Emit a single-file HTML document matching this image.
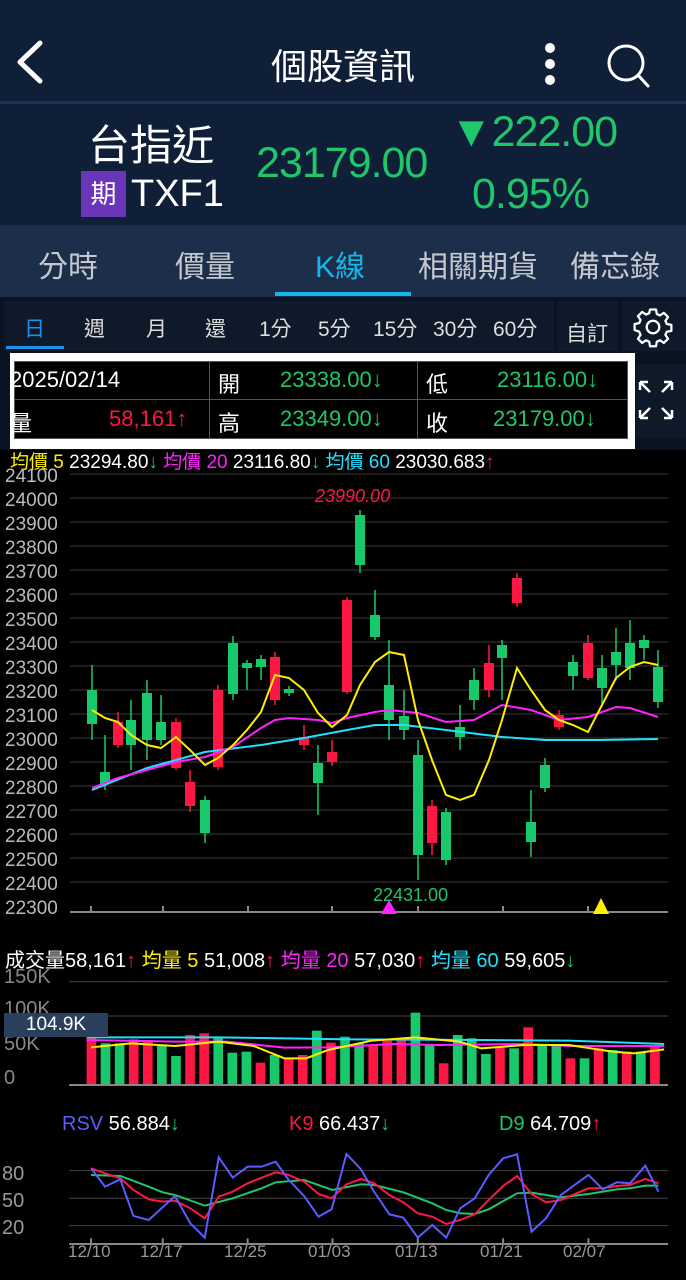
<!DOCTYPE html>
<html><head><meta charset="utf-8"><style>
*{margin:0;padding:0;box-sizing:border-box}
body{width:686px;height:1280px;background:#000;font-family:"Liberation Sans","Noto Sans CJK TC",sans-serif;color:#fff;position:relative;overflow:hidden}
.a{position:absolute;white-space:nowrap}
.g{color:#1fc66a}.r{color:#ff1744}
</style></head><body>
<div class="a" style="left:0;top:0;width:686px;height:102px;background:#0f1f38"></div>
<div class="a" style="left:0;top:101px;width:686px;height:3px;background:#14345a"></div>
<div class="a" style="left:0;top:104px;width:686px;height:121px;background:#0f1f38"></div>
<svg class="a" style="left:14px;top:40px" width="30" height="44"><path d="M26 3 L6 22 L26 41" stroke="#fff" stroke-width="5" fill="none" stroke-linecap="round" stroke-linejoin="round"/></svg>
<div class="a" style="left:0;width:686px;text-align:center;top:38px;font-size:36px">個股資訊</div>
<svg class="a" style="left:538px;top:42px" width="24" height="44"><circle cx="12" cy="6" r="5" fill="#fff"/><circle cx="12" cy="22" r="5" fill="#fff"/><circle cx="12" cy="38" r="5" fill="#fff"/></svg>
<svg class="a" style="left:604px;top:42px" width="48" height="48"><circle cx="22" cy="21" r="17" stroke="#fff" stroke-width="3" fill="none"/><path d="M34 33 L44 44" stroke="#fff" stroke-width="3" stroke-linecap="round"/></svg>
<div class="a" style="left:88px;top:112px;font-size:42px">台指近</div>
<div class="a" style="left:81px;top:171px;width:45px;height:46px;background:#6a35b8;font-size:26px;text-align:center;line-height:46px">期</div>
<div class="a" style="left:131px;top:173px;font-size:38px">TXF1</div>
<div class="a g" style="left:256px;top:139px;font-size:43px;letter-spacing:-1px">23179.00</div>
<div class="a g" style="left:450px;top:108px;font-size:43px;letter-spacing:-1px">▼222.00</div>
<div class="a g" style="left:472px;top:170px;font-size:43px;letter-spacing:-1px">0.95%</div>
<div class="a" style="left:0;top:225px;width:686px;height:72px;background:#1c2e4a"></div>
<div class="a" style="left:38px;top:242px;font-size:30px;color:#c4c8ce">分時</div>
<div class="a" style="left:175px;top:242px;font-size:30px;color:#c4c8ce">價量</div>
<div class="a" style="left:315px;top:242px;font-size:30px;color:#18b6e8">K線</div>
<div class="a" style="left:418px;top:242px;font-size:30px;color:#c4c8ce">相關期貨</div>
<div class="a" style="left:570px;top:242px;font-size:30px;color:#c4c8ce">備忘錄</div>
<div class="a" style="left:275px;top:292px;width:136px;height:4px;background:#18b6e8"></div>
<div class="a" style="left:0;top:297px;width:686px;height:153px;background:#0a1322"></div>
<div class="a" style="left:4px;top:301px;width:550px;height:50px;background:#0e1a2a"></div>
<div class="a" style="left:557px;top:301px;width:61px;height:50px;background:#0e1a2a"></div>
<div class="a" style="left:622px;top:301px;width:64px;height:50px;background:#0e1a2a"></div>
<div class="a" style="left:0;top:313px;font-size:21px;color:#ddd;width:560px">
<span class="a" style="left:24px;color:#1e90e8">日</span><span class="a" style="left:84px">週</span><span class="a" style="left:146px">月</span><span class="a" style="left:205px">還</span><span class="a" style="left:259px">1分</span><span class="a" style="left:318px">5分</span><span class="a" style="left:373px">15分</span><span class="a" style="left:433px">30分</span><span class="a" style="left:493px">60分</span><span class="a" style="left:566px;top:5px">自訂</span></div>
<div class="a" style="left:6px;top:346px;width:58px;height:3px;background:#1e90e8"></div>
<svg class="a" style="left:632px;top:306px" width="42" height="42" viewBox="0 0 24 24"><path d="M10.3 2h3.4l.5 2.6 1.8.8 2.2-1.5 2.4 2.4-1.5 2.2.8 1.8 2.6.5v3.4l-2.6.5-.8 1.8 1.5 2.2-2.4 2.4-2.2-1.5-1.8.8-.5 2.6h-3.4l-.5-2.6-1.8-.8-2.2 1.5-2.4-2.4 1.5-2.2-.8-1.8L1.5 13.7v-3.4l2.6-.5.8-1.8-1.5-2.2 2.4-2.4 2.2 1.5 1.8-.8z" fill="none" stroke="#fff" stroke-width="1.3" stroke-linejoin="round"/><circle cx="12" cy="12" r="3.6" fill="none" stroke="#fff" stroke-width="1.3"/></svg>
<div class="a" style="left:636px;top:364px;width:50px;height:74px;background:#0e1a2a"></div>
<svg class="a" style="left:636px;top:378px" width="40" height="44" stroke="#fff" stroke-width="2.5" fill="none"><path d="M4 4 L14 14 M4 4 h8 M4 4 v8 M36 4 L26 14 M36 4 h-8 M36 4 v8 M4 40 L14 30 M4 40 h8 M4 40 v-8 M36 40 L26 30 M36 40 h-8 M36 40 v-8"/></svg>
<div class="a" style="left:10px;top:353px;width:625px;height:96px;background:#fff"></div>
<div class="a" style="left:14px;top:361px;width:614px;height:78px;background:#000;border:1px solid #555"></div>
<div class="a" style="left:14px;top:399px;width:614px;height:1px;background:#555"></div>
<div class="a" style="left:209px;top:361px;width:1px;height:78px;background:#555"></div>
<div class="a" style="left:417px;top:361px;width:1px;height:78px;background:#555"></div>
<div class="a" style="top:367px;left:0;font-size:22px">
<span class="a" style="left:10px">2025/02/14</span><span class="a" style="left:218px">開</span><span class="a g" style="left:280px">23338.00↓</span><span class="a" style="left:426px">低</span><span class="a g" style="left:497px">23116.00↓</span></div>
<div class="a" style="top:406px;left:0;font-size:22px">
<span class="a" style="left:10px">量</span><span class="a r" style="left:109px">58,161↑</span><span class="a" style="left:218px">高</span><span class="a g" style="left:280px">23349.00↓</span><span class="a" style="left:426px">收</span><span class="a g" style="left:493px">23179.00↓</span></div>
<div class="a" style="left:10px;top:447px;font-size:19px"><span style="color:#ffee00">均價 5</span> 23294.80<span class="g">↓</span> <span style="color:#ff22ff">均價 20</span> 23116.80<span class="g">↓</span> <span style="color:#22e0ff">均價 60</span> 23030.683<span class="r">↑</span></div>
<div class="a" style="left:5px;top:465px;font-size:19px;color:#bbb;line-height:24px">24100<br>24000<br>23900<br>23800<br>23700<br>23600<br>23500<br>23400<br>23300<br>23200<br>23100<br>23000<br>22900<br>22800<br>22700<br>22600<br>22500<br>22400<br>22300</div>
<svg class="a" style="left:0;top:0" width="686" height="1280">
<g stroke="#3a3a3a" stroke-width="1">
<path d="M70 474H668M70 498H668M70 522H668M70 546H668M70 570H668M70 594H668M70 618H668M70 642H668M70 666H668M70 690H668M70 714H668M70 738H668M70 762H668M70 786H668M70 810H668M70 834H668M70 858H668M70 882H668"/>
</g>
<path d="M70 912H668" stroke="#888" stroke-width="2"/>
<path d="M91 906v6M163 906v6M248 906v6M332 906v6M418 906v6M503 906v6M588 906v6" stroke="#888" stroke-width="2"/>
<g id="c"></g>
<polyline fill="none" stroke="#22e0ff" stroke-width="2" points="92,790 147,768 205,752 261,745 304,738 347,730 375,725 404,725 446,730 502,737 545,740 600,740 658,739"/>
<polyline fill="none" stroke="#ff22ff" stroke-width="2" points="92,788 118,778 147,770 176,762 205,757 233,747 261,728 275,720 289,718 318,720 332,723 347,718 375,712 389,710 418,713 446,722 474,720 502,705 531,710 559,720 588,717 616,707 630,708 658,717"/>
<polyline fill="none" stroke="#ffee00" stroke-width="2" points="92,710 105,718 118,722 131,735 147,745 161,748 176,737 190,750 205,765 218,758 233,745 247,730 261,712 275,675 289,678 304,690 318,713 332,727 347,715 360,685 375,662 389,652 404,655 418,720 432,760 446,795 460,800 474,795 489,760 502,720 517,668 531,690 545,710 559,720 573,725 588,732 602,705 616,678 630,667 644,662 658,665"/>
<path d="M381 914 L389 900 L397 914Z" fill="#ff22ff"/><path d="M593 914 L601 898 L609 914Z" fill="#ffee00"/>
<text x="315" y="502" font-size="18" font-style="italic" fill="#ff1744" font-family="Liberation Sans">23990.00</text>
<text x="373" y="901" font-size="18" fill="#1fc66a" font-family="Liberation Sans">22431.00</text>
</svg>
<div class="a" style="left:5px;top:944px;font-size:20px">成交量58,161<span class="r">↑</span> <span style="color:#ffee00">均量 5</span> 51,008<span class="r">↑</span> <span style="color:#ff22ff">均量 20</span> 57,030<span class="r">↑</span> <span style="color:#22e0ff">均量 60</span> 59,605<span class="g">↓</span></div>
<div class="a" style="left:4px;top:966px;font-size:20px;color:#888">150K</div>
<div class="a" style="left:4px;top:998px;font-size:20px;color:#888">100K</div>
<div class="a" style="left:4px;top:1033px;font-size:20px;color:#888">50K</div>
<div class="a" style="left:4px;top:1067px;font-size:20px;color:#888">0</div>
<svg class="a" style="left:0;top:940px" width="686" height="340">
<g transform="scale(0.4375,0.3333)">
<path d="M158 125H1527M158 228H1527" stroke="#444" stroke-width="1" vector-effect="non-scaling-stroke"/>
<g id="v"></g>
<path d="M158 435H1527" stroke="#888" stroke-width="2" vector-effect="non-scaling-stroke"/>
<g fill="none" stroke-width="2" vector-effect="non-scaling-stroke">
<polyline vector-effect="non-scaling-stroke" stroke="#22e0ff" points="198,292 500,292 800,298 1100,300 1300,302 1518,312"/>
<polyline vector-effect="non-scaling-stroke" stroke="#ff22ff" points="198,300 400,305 520,305 650,323 750,322 900,312 1000,315 1200,312 1300,318 1518,318"/>
<polyline vector-effect="non-scaling-stroke" stroke="#ffee00" points="208,322 300,310 400,318 500,305 580,318 650,355 700,355 750,330 850,302 950,292 1050,305 1100,325 1200,315 1300,315 1400,335 1450,340 1518,328"/>
<path vector-effect="non-scaling-stroke" d="M158 692H1527M158 775H1527M158 857H1527" stroke="#444" stroke-width="1"/>
<path vector-effect="non-scaling-stroke" d="M158 912H1527M208 895v17M372 895v17M566 895v17M760 895v17M955 895v17M1150 895v17M1345 895v17" stroke="#888" stroke-width="2"/>
<polyline vector-effect="non-scaling-stroke" stroke="#1fc66a" points="208,705 275,708 340,740 372,757 400,765 468,797 532,775 598,745 630,727 695,720 760,750 825,733 855,735 922,757 988,790 1020,810 1052,820 1085,822 1117,808 1182,760 1215,758 1282,772 1345,762 1410,748 1440,745 1475,737 1505,737"/>
<polyline vector-effect="non-scaling-stroke" stroke="#ff1744" points="208,685 240,700 275,715 305,750 340,778 372,785 400,782 435,805 468,835 500,770 532,755 566,730 598,713 630,697 660,705 695,725 728,762 758,775 792,733 825,717 855,730 890,765 922,787 955,820 988,830 1020,852 1052,840 1085,823 1117,780 1150,738 1182,708 1215,762 1248,787 1282,780 1345,745 1378,745 1410,738 1440,735 1475,717 1505,730"/>
<polyline vector-effect="non-scaling-stroke" stroke="#5b5bff" points="208,685 240,740 275,718 305,828 340,840 400,768 435,850 468,893 500,652 532,713 566,680 598,680 630,665 660,720 695,768 728,830 758,808 792,642 825,688 855,755 890,823 922,833 955,893 988,855 1020,893 1052,805 1085,775 1117,705 1150,655 1182,643 1215,875 1248,835 1282,765 1345,705 1378,748 1410,727 1440,730 1475,677 1505,755"/>
</g></g></svg>
<div class="a" style="left:4px;top:1013px;width:104px;height:24px;background:#2a3f5c;font-size:19px;text-align:center;line-height:24px">104.9K</div>
<div class="a" style="left:62px;top:1113px;font-size:20px"><span style="color:#5b5bff">RSV</span> 56.884<span class="g">↓</span></div>
<div class="a" style="left:289px;top:1113px;font-size:20px"><span class="r">K9</span> 66.437<span class="g">↓</span></div>
<div class="a" style="left:499px;top:1113px;font-size:20px"><span class="g">D9</span> 64.709<span class="r">↑</span></div>
<div class="a" style="left:2px;top:1161px;font-size:20px;color:#999;line-height:27px">80<br>50<br>20</div>
<div class="a" style="top:1242px;left:0;font-size:17px;color:#999">
<span class="a" style="left:68px">12/10</span><span class="a" style="left:140px">12/17</span><span class="a" style="left:224px">12/25</span><span class="a" style="left:308px">01/03</span><span class="a" style="left:395px">01/13</span><span class="a" style="left:480px">01/21</span><span class="a" style="left:563px">02/07</span></div>
<script>
var C=[[92,690,724,665,740,'g'],[105,772,784,735,790,'g'],[118,722,745,712,748,'r'],[131,720,745,700,770,'g'],[147,693,740,680,760,'g'],[161,722,740,695,745,'g'],[176,722,768,718,770,'r'],[190,782,806,770,812,'r'],[205,800,833,796,843,'g'],[218,690,767,685,770,'r'],[233,643,694,636,700,'g'],[247,663,668,660,690,'g'],[261,659,667,655,680,'g'],[275,657,700,652,705,'r'],[289,689,693,686,696,'g'],[304,737,745,725,750,'r'],[318,763,783,745,815,'g'],[332,752,762,740,766,'r'],[347,600,692,597,694,'r'],[360,515,565,510,573,'g'],[375,615,637,590,640,'g'],[389,685,720,640,740,'g'],[404,716,730,690,740,'g'],[418,755,855,740,880,'g'],[432,806,843,800,855,'r'],[446,812,860,808,865,'g'],[460,727,737,705,750,'g'],[474,680,700,668,710,'g'],[489,663,690,645,697,'r'],[502,645,658,640,700,'g'],[517,578,603,573,607,'r'],[531,822,842,790,857,'g'],[545,765,788,758,792,'g'],[559,715,727,710,730,'r'],[573,662,676,655,690,'g'],[588,643,678,635,680,'r'],[602,668,688,655,705,'g'],[616,652,665,628,680,'g'],[630,643,668,620,680,'g'],[644,640,648,635,660,'g'],[658,667,702,650,708,'g']];
var s='';C.forEach(function(c){var col=c[5]=='g'?'#19c86a':'#ff1744';s+='<line x1="'+c[0]+'" x2="'+c[0]+'" y1="'+c[3]+'" y2="'+c[4]+'" stroke="'+col+'" stroke-width="1.5"/><rect x="'+(c[0]-5)+'" y="'+c[1]+'" width="10" height="'+Math.max(2,c[2]-c[1])+'" fill="'+col+'"/>';});
document.getElementById('c').innerHTML=s;
var T=[290,310,310,298,300,315,348,285,280,295,338,335,368,345,355,345,272,308,290,310,315,302,300,218,316,370,285,295,342,320,325,262,315,318,355,355,325,330,335,335,315];
var K='rggrrggrrgggrgrrgrggrrrggrgggrgrggrgrgrgr';
s='';T.forEach(function(t,i){s+='<rect x="'+(198+i*32.2)+'" y="'+t+'" width="22" height="'+(435-t)+'" fill="'+(K[i]=='g'?'#19c86a':'#ff1744')+'"/>';});
document.getElementById('v').innerHTML=s;
</script>
</body></html>
